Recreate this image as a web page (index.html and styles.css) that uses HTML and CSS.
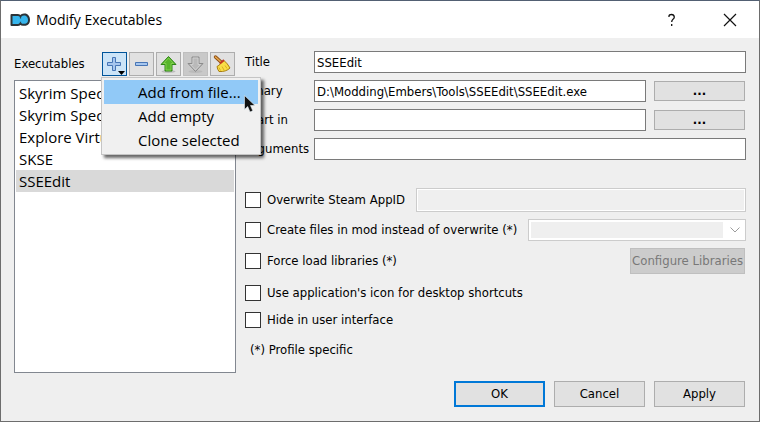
FILE: index.html
```html
<!DOCTYPE html>
<html lang="en">
<head>
<meta charset="utf-8">
<title>Modify Executables</title>
<link rel="stylesheet" href="styles.css">
</head>
<body>
<div class="dialog">
  <header class="titlebar">
    <svg class="logo" width="20" height="14" viewBox="0 0 20 14"><path d="M1.500 2h6.500q1.500 0 2.500 1.200Q12 1.500 14 1.500h1.500Q19 3 19 7t-3.500 4.800H13q-1.500 0-2.500-1.200Q9.500 12 8 12H1.500z" fill="#36b5ec" stroke="#2b3337" stroke-width="2" stroke-linejoin="round"/><path d="M10.500 3.500v2M10.500 8.800v2" stroke="#2b3f48" stroke-width="1.200"/></svg>
    <h1 class="caption">Modify Executables</h1>
    <button class="winbtn" type="button" aria-label="Help"><svg width="10" height="14" viewBox="0 0 10 14"><path d="M2 4V3q0-1.500 2.500-1.500T7.300 4Q7.300 5.300 6 6.300T4.700 9M4.700 11v2" fill="none" stroke="#111" stroke-width="1.300"/></svg></button>
    <button class="winbtn" type="button" aria-label="Close"><svg width="14" height="14" viewBox="0 0 14 14"><path d="M1 1l12 12M13 1L1 13" stroke="#111" stroke-width="1.200"/></svg></button>
  </header>
  <main class="content">
    <section class="side">
      <div class="toolbar">
        <span class="toolbar-label">Executables</span>
        <div class="menu-anchor">
          <button class="tool active" type="button" aria-label="Add"><svg width="23" height="22" viewBox="0 0 23 22"><path d="M9.500 4.500h3v5h5v3h-5v5h-3v-5h-5v-3h5z" fill="#a6c6ee" stroke="#4775b5"/><path d="M15 18h7l-3.500 4z" fill="#000"/></svg></button>
          <div class="menu" role="menu">
            <button class="menu-item current" type="button" role="menuitem">Add from file...</button>
            <button class="menu-item" type="button" role="menuitem">Add empty</button>
            <button class="menu-item" type="button" role="menuitem">Clone selected</button>
            <svg class="cursor" width="12" height="18" viewBox="0 0 12 18"><path d="M.5.500v14l3.200-3 2.300 5.500 2.800-1.200-2.300-5.300h4.500z" fill="#111" stroke="#e8f1f8" stroke-width=".6"/></svg>
          </div>
        </div>
        <button class="tool" type="button" aria-label="Remove"><svg width="23" height="22" viewBox="0 0 23 22"><path d="M5.500 9.500h12v3h-12z" fill="#a6c6ee" stroke="#4775b5"/></svg></button>
        <button class="tool" type="button" aria-label="Move up"><svg width="23" height="22" viewBox="0 0 23 22"><ellipse cx="11.500" cy="18.500" rx="7" ry="1.500" fill="#bcbcbc"/><path d="M11.500 3.500l7.500 8h-4v6.500H8v-6.500H4z" fill="#57b52b" stroke="#2f8418" stroke-linejoin="round"/><path d="M11.500 5l5 5.500h-2.500v6.500H9v-6.500H6.500z" fill="none" stroke="#8ad654" stroke-width=".8"/></svg></button>
        <button class="tool off" type="button" aria-label="Move down" disabled><svg width="23" height="22" viewBox="0 0 23 22"><ellipse cx="11.500" cy="18.500" rx="7" ry="1.500" fill="#bababa"/><path d="M8 4h7v6.500h4l-7.500 8-7.500-8h4z" fill="#b9b9b9" stroke="#8c8c8c" stroke-linejoin="round"/><path d="M9 5h5v6.500h2.500l-5 5.500-5-5.500H9z" fill="none" stroke="#d4d4d4" stroke-width=".8"/></svg></button>
        <button class="tool" type="button" aria-label="Clean"><svg width="23" height="22" viewBox="0 0 23 22"><path d="M4.500 4l5.500 5" stroke="#8d4d14" stroke-width="3.400" stroke-linecap="round"/><path d="M4.500 4l5 4.500" stroke="#e6a84b" stroke-width="1.600" stroke-linecap="round"/><path d="M13 7.500q3.500 3 6 7.500-4 4-11 3.500-1.500-2-2-5 3-1 3.500-3.500z" fill="#f9df48" stroke="#a97e0e"/><path d="M8 14.500l1.500 3M11 13.500l2 3.500M14 12.500l2 3" stroke="#dcae1e"/><path d="M9 10.500l4-3.500" stroke="#c33922" stroke-width="2"/></svg></button>
      </div>
      <ul class="list" aria-label="Executables">
        <li>Skyrim Special</li>
        <li>Skyrim Special</li>
        <li>Explore Virtual</li>
        <li>SKSE</li>
        <li class="selected">SSEEdit</li>
      </ul>
    </section>
    <form class="form">
      <div class="fields">
        <label for="title">Title</label>
        <input class="text wide" id="title" type="text" value="SSEEdit">
        <label for="binary">Binary</label>
        <input class="text" id="binary" type="text" value="D:\Modding\Embers\Tools\SSEEdit\SSEEdit.exe">
        <button class="button browse" type="button" aria-label="Browse for binary">...</button>
        <label for="start">Start in</label>
        <input class="text" id="start" type="text">
        <button class="button browse" type="button" aria-label="Browse for folder">...</button>
        <label for="args">Arguments</label>
        <input class="text wide" id="args" type="text">
      </div>
      <div class="options">
        <div class="option">
          <label class="check"><input type="checkbox">Overwrite Steam AppID</label>
          <input class="text appid" type="text" aria-label="Steam AppID" disabled>
        </div>
        <div class="option">
          <label class="check"><input type="checkbox">Create files in mod instead of overwrite (*)</label>
          <div class="select-wrap">
            <select aria-label="Mod" disabled><option></option></select>
            <svg class="chevron" width="10" height="6" viewBox="0 0 10 6"><path d="M.5.500L5 5 9.500.500" fill="none" stroke="#9c9c9c"/></svg>
          </div>
        </div>
        <div class="option">
          <label class="check"><input type="checkbox">Force load libraries (*)</label>
          <button class="button configure" type="button" disabled>Configure Libraries</button>
        </div>
        <div class="option tall">
          <label class="check"><input type="checkbox">Use application's icon for desktop shortcuts</label>
        </div>
        <div class="option">
          <label class="check"><input type="checkbox">Hide in user interface</label>
        </div>
        <p class="note">(*) Profile specific</p>
      </div>
    </form>
  </main>
  <footer class="actions">
    <button class="button primary" type="button">OK</button>
    <button class="button" type="button">Cancel</button>
    <button class="button" type="button">Apply</button>
  </footer>
</div>
</body>
</html>
```
FILE: styles.css
```css
* {
  box-sizing: border-box;
}

body {
  margin: 0;
  color: #000;
  font: 13px/16px "DejaVu Sans Condensed", "DejaVu Sans", sans-serif;
}

button,
input,
select {
  margin: 0;
  color: inherit;
  font: inherit;
}

.dialog {
  display: flex;
  flex-direction: column;
  min-height: 100vh;
  border: 1px solid #6d6d6d;
  border-top-color: #526073;
  background: #efefef;
}

.titlebar {
  display: flex;
  align-items: center;
  height: 37px;
  padding-left: 9px;
  background: #fff;
}

.caption {
  flex: 1;
  margin: 0 0 0 6px;
  font: 14px/22px "Open Sans", "Noto Sans", sans-serif;
}

.winbtn {
  display: grid;
  place-items: center;
  width: 58px;
  height: 36px;
  padding: 0;
  border: 0;
  background: none;
}

.content {
  display: flex;
  flex: 1;
  gap: 9px;
  padding: 13px 13px 0;
}

.side {
  display: flex;
  flex: 0 0 222px;
  flex-direction: column;
  gap: 4px;
  min-width: 0;
}

.toolbar {
  display: flex;
  gap: 2px;
  padding: 1px 1px 0 0;
}

.toolbar-label {
  flex: 1;
  line-height: 24px;
}

.menu-anchor {
  position: relative;
}

.tool {
  display: block;
  width: 25px;
  height: 24px;
  padding: 0;
  border: 1px solid #adadad;
  background: #e1e1e1;
}

.tool svg {
  display: block;
}

.tool.active {
  border-color: #00549a;
  background: #cce4f7;
}

.tool.off {
  border-color: #bfbfbf;
  background: #c9c9c9;
}

.menu {
  position: absolute;
  z-index: 2;
  top: 25px;
  left: -1px;
  width: 160px;
  padding: 2px;
  border: 1px solid #c5c5c5;
  background: #f0f0f0;
  box-shadow: 3px 3px 3px rgba(0, 0, 0, 0.6);
}

.menu-item {
  display: block;
  width: 100%;
  padding: 0 0 0 34px;
  border: 0;
  background: none;
  font: 15px/24px "Open Sans", "Noto Sans", sans-serif;
  text-align: left;
  white-space: nowrap;
}

.menu-item.current {
  background: #91c9f7;
}

.cursor {
  position: absolute;
  top: 17px;
  right: 4px;
}

.list {
  flex: 1;
  margin: 0;
  padding: 1px;
  overflow: hidden;
  border: 1px solid #828790;
  background: #fff;
  list-style: none;
  font: 15px/22px "Open Sans", "Noto Sans", sans-serif;
}

.list li {
  padding-left: 3px;
  overflow: hidden;
  white-space: nowrap;
}

.list .selected {
  background: #d9d9d9;
}

.form {
  flex: 1;
  min-width: 0;
}

.fields {
  display: grid;
  grid-template-columns: 69px 1fr 92px;
  gap: 7px 0;
  align-items: center;
}

.text {
  width: 100%;
  height: 22px;
  padding: 0 2px;
  border: 1px solid #7a7a7a;
  background: #fff;
}

.wide {
  grid-column: span 2;
}

.button {
  width: 91px;
  height: 26px;
  padding: 0;
  border: 1px solid #adadad;
  background: #e1e1e1;
}

.browse {
  height: 20px;
  font-weight: bold;
  line-height: 18px;
}

.fields .text:not(.wide) {
  width: calc(100% - 8px);
}

.options {
  display: flex;
  flex-direction: column;
  gap: 7px;
  padding-top: 28px;
}

.option {
  display: flex;
  gap: 11px;
  align-items: center;
  justify-content: space-between;
}

.tall {
  height: 24px;
}

.check {
  display: flex;
  flex: none;
  gap: 6px;
  align-items: center;
}

.check input {
  width: 16px;
  height: 16px;
  border: 1px solid #333;
  background: #fff;
  appearance: none;
}

.appid {
  flex: 1;
  height: 24px;
  border-color: #ccc;
  background: #efefef;
  box-shadow: inset 0 0 0 1px #fff;
}

.select-wrap {
  position: relative;
  flex: 1;
}

.select-wrap select {
  display: block;
  width: 100%;
  height: 22px;
  padding: 2px 22px 2px 2px;
  border: 1px solid #ccc;
  border-radius: 0;
  background: linear-gradient(#efefef, #efefef) content-box no-repeat, #fff;
  appearance: none;
  opacity: 1;
}

.chevron {
  position: absolute;
  top: 8px;
  right: 6px;
}

.configure {
  width: auto;
  margin-right: 1px;
  padding: 0 1px;
  border-color: #bfbfbf;
  background: #ccc;
  color: #787878;
}

.note {
  margin: 0;
  padding-left: 5px;
  line-height: 30px;
}

.actions {
  display: flex;
  gap: 9px;
  justify-content: flex-end;
  padding: 8px 14px 14px;
}

.primary {
  border: 2px solid #0078d7;
}
```
